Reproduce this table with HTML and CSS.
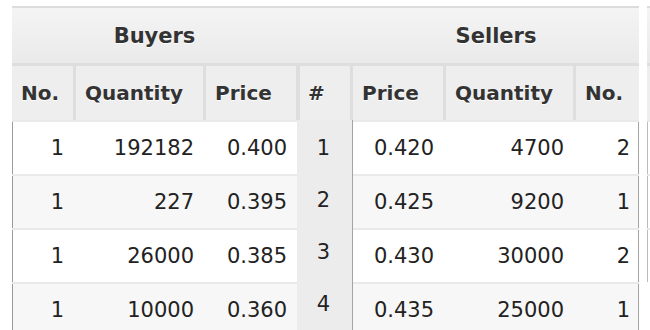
FILE: index.html
```html
<!DOCTYPE html>
<html>
<head>
<meta charset="utf-8">
<link rel="stylesheet" href="styles.css">
</head>
<body>
<div class="page">
  <div class="book">
    <div class="band">
      <div class="title t-buyers">Buyers</div>
      <div class="title t-gap"></div>
      <div class="title t-sellers">Sellers</div>
    </div>
    <div class="grid">
      <div class="side buyers">
        <div class="hrow">
          <div class="hc">No.</div>
          <div class="hc">Quantity</div>
          <div class="hc">Price</div>
        </div>
        <div class="drow"><div class="dc">1</div><div class="dc">192182</div><div class="dc">0.400</div></div>
        <div class="drow alt"><div class="dc">1</div><div class="dc">227</div><div class="dc">0.395</div></div>
        <div class="drow"><div class="dc">1</div><div class="dc">26000</div><div class="dc">0.385</div></div>
        <div class="drow alt"><div class="dc">1</div><div class="dc">10000</div><div class="dc">0.360</div></div>
      </div>
      <div class="idx">
        <div class="ihead">#</div>
        <div class="ibody">
          <div class="icell">1</div>
          <div class="icell">2</div>
          <div class="icell">3</div>
          <div class="icell">4</div>
        </div>
      </div>
      <div class="side sellers">
        <div class="hrow">
          <div class="hc">Price</div>
          <div class="hc">Quantity</div>
          <div class="hc">No.</div>
        </div>
        <div class="drow"><div class="dc">0.420</div><div class="dc">4700</div><div class="dc">2</div></div>
        <div class="drow alt"><div class="dc">0.425</div><div class="dc">9200</div><div class="dc">1</div></div>
        <div class="drow"><div class="dc">0.430</div><div class="dc">30000</div><div class="dc">2</div></div>
        <div class="drow alt"><div class="dc">0.435</div><div class="dc">25000</div><div class="dc">1</div></div>
      </div>
    </div>
  </div>
  <div class="peek">
    <div class="band peek-band"></div>
    <div class="peek-head"></div>
    <div class="peek-row"></div>
    <div class="peek-row"></div>
    <div class="peek-row"></div>
  </div>
</div>
</body>
</html>
```
FILE: styles.css
```css
html, body {
  margin: 0;
  padding: 0;
  overflow: hidden;
  background: #ffffff;
}
body {
  font-family: "DejaVu Sans", "Liberation Sans", sans-serif;
  color: #222222;
}
.page {
  display: flex;
  align-items: flex-start;
  padding: 6px 0 0 12px;
  width: 650px;
  height: 330px;
  box-sizing: border-box;
}
.book {
  width: 627px;
  flex: none;
}
.band {
  display: flex;
  height: 55px;
  border-top: 2px solid #dcdcdc;
  border-bottom: 3px solid #dedede;
  background: linear-gradient(#f4f4f4, #eaeaea);
}
.title {
  display: flex;
  align-items: center;
  justify-content: center;
  font-weight: bold;
  font-size: 21px;
  color: #333333;
  text-shadow: 0 1px 0 #ffffff;
}
.t-buyers { width: 285px; }
.t-gap { width: 56px; }
.t-sellers { width: 286px; }

.grid {
  display: flex;
  align-items: flex-start;
}
.side {
  flex: none;
}
.buyers { width: 285px; }
.sellers { width: 286px; }

.hrow {
  display: grid;
  column-gap: 3px;
  height: 54px;
  background: #dedede;
}
.buyers .hrow, .buyers .drow {
  grid-template-columns: 61px 127px 90px;
}
.sellers .hrow, .sellers .drow {
  grid-template-columns: 90px 127px 63px;
}
.hc {
  display: flex;
  align-items: center;
  padding-left: 9px;
  background: #eeeeee;
  font-weight: bold;
  font-size: 20px;
  color: #333333;
  text-shadow: 0 1px 0 #ffffff;
}
.drow {
  display: grid;
  column-gap: 3px;
  height: 52px;
  border-top: 2px solid #e9e9e9;
  background: #ffffff;
}
.drow.alt {
  background: #f7f7f7;
}
.buyers .drow {
  box-shadow: inset 1px 0 0 #9a9a9a;
}
.sellers .drow {
  box-shadow: inset -1px 0 0 #a4a4a4;
}
.dc {
  display: flex;
  align-items: center;
  justify-content: flex-end;
  padding-right: 9px;
  font-size: 21px;
  color: #222222;
}

.idx {
  width: 56px;
  flex: none;
}
.ihead {
  display: flex;
  align-items: center;
  height: 54px;
  box-sizing: border-box;
  border-left: 3px solid #dedede;
  border-right: 3px solid #dedede;
  padding-left: 8px;
  background: #eeeeee;
  font-weight: bold;
  font-size: 20px;
  color: #333333;
  text-shadow: 0 1px 0 #ffffff;
}
.ibody {
  padding-top: 2px;
  height: 220px;
  background: #ececec;
  box-shadow: inset -1px 0 0 #a4a4a4;
}
.icell {
  display: flex;
  align-items: center;
  justify-content: center;
  height: 52px;
  padding-right: 3px;
  font-size: 21px;
  color: #222222;
}

.peek {
  flex: none;
  width: 3px;
  margin-left: 8px;
}
.peek-band {
  height: 55px;
}
.peek-head {
  height: 54px;
  background: #eeeeee;
}
.peek-row {
  height: 52px;
  border-top: 2px solid #e9e9e9;
  box-shadow: inset 1px 0 0 #bbbbbb;
}
```
